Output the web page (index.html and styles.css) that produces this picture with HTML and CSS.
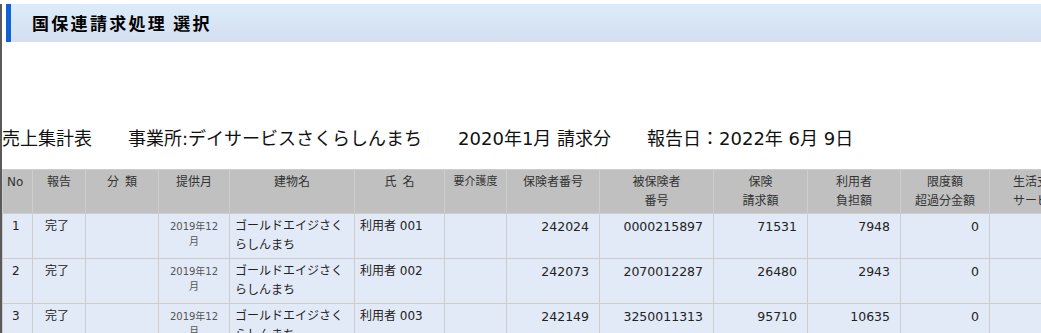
FILE: index.html
```html
<!DOCTYPE html>
<html lang="ja">
<head>
<meta charset="utf-8">
<title>国保連請求処理 選択</title>
<link rel="stylesheet" href="styles.css">
</head>
<body>
<div class="frame">
  <h1 class="page-title">国保連請求処理 選択</h1>
  <p class="summary"><span class="seg">売上集計表</span><span class="seg">事業所:デイサービスさくらしんまち</span><span class="seg">2020年1月 請求分</span><span class="seg">報告日：2022年 6月 9日</span></p>
  <table class="report">
    <colgroup>
      <col class="c-no"><col class="c-rep"><col class="c-cat"><col class="c-month"><col class="c-bldg"><col class="c-name"><col class="c-care"><col class="c-insr"><col class="c-insd"><col class="c-claim"><col class="c-user"><col class="c-over"><col class="c-life"><col class="c-total">
    </colgroup>
    <thead>
      <tr>
        <th>No</th>
        <th>報告</th>
        <th>分&ensp;類</th>
        <th>提供月</th>
        <th>建物名</th>
        <th>氏&ensp;名</th>
        <th class="small">要介護度</th>
        <th>保険者番号</th>
        <th>被保険者<br>番号</th>
        <th>保険<br>請求額</th>
        <th>利用者<br>負担額</th>
        <th>限度額<br>超過分金額</th>
        <th>生活支援<br>サービス</th>
        <th>合計</th>
      </tr>
    </thead>
    <tbody>
      <tr>
        <td>1</td><td class="rep">完了</td><td></td><td class="month">2019年12<br>月</td><td>ゴールドエイジさく<br>らしんまち</td><td>利用者 001</td><td></td><td class="num">242024</td><td class="num">0000215897</td><td class="num">71531</td><td class="num">7948</td><td class="num">0</td><td></td><td></td>
      </tr>
      <tr>
        <td>2</td><td class="rep">完了</td><td></td><td class="month">2019年12<br>月</td><td>ゴールドエイジさく<br>らしんまち</td><td>利用者 002</td><td></td><td class="num">242073</td><td class="num">2070012287</td><td class="num">26480</td><td class="num">2943</td><td class="num">0</td><td></td><td></td>
      </tr>
      <tr>
        <td>3</td><td class="rep">完了</td><td></td><td class="month">2019年12<br>月</td><td>ゴールドエイジさく<br>らしんまち</td><td>利用者 003</td><td></td><td class="num">242149</td><td class="num">3250011313</td><td class="num">95710</td><td class="num">10635</td><td class="num">0</td><td></td><td></td>
      </tr>
    </tbody>
  </table>
</div>
</body>
</html>
```

FILE: styles.css
```css
html, body {
  margin: 0;
  padding: 0;
  overflow: hidden;
  background: #ffffff;
}

body {
  font-family: "DejaVu Sans", "Noto Sans CJK JP", sans-serif;
  color: #222;
}

.frame {
  border-left: 2px solid #5a5a5a;
  min-height: 100vh;
  box-sizing: border-box;
}

.page-title {
  margin: 4px 0 0 4px;
  height: 38px;
  box-sizing: border-box;
  border-left: 5px solid #0f63d2;
  padding-left: 21px;
  background: linear-gradient(to bottom, #dcebf9 0%, #d5dff1 100%);
  font-family: "Noto Sans CJK JP", sans-serif;
  font-size: 17px;
  font-weight: 700;
  line-height: 38px;
  color: #000;
  letter-spacing: 2.3px;
}

.summary {
  margin: 85px 0 0 0;
  font-size: 18px;
  line-height: 24px;
  color: #111;
  white-space: nowrap;
}

.seg + .seg {
  margin-left: 36px;
}

.report {
  margin-top: 18px;
  border-collapse: collapse;
  table-layout: fixed;
  width: 1178px;
  font-size: 12px;
}

.report th,
.report td {
  border: 1px solid #cdcdcd;
  vertical-align: top;
  white-space: nowrap;
  overflow: hidden;
}

.report th {
  background: #c0c0c0;
  color: #333;
  font-weight: 400;
  height: 44px;
  box-sizing: border-box;
  padding: 3px 2px 0;
  line-height: 19px;
  text-align: center;
}

.report th:first-child {
  text-align: left;
  padding-left: 4px;
}

.report th.small {
  font-size: 11px;
  line-height: 17px;
}

.report td {
  background: #e3eaf7;
  height: 45px;
  box-sizing: border-box;
  padding: 3px 5px 0;
  line-height: 19px;
  color: #222;
  font-size: 12px;
}

.report td:first-child {
  padding-left: 9px;
}

.report td.rep {
  padding-left: 12px;
}

.report td.month {
  font-size: 10px;
  line-height: 15px;
  color: #555;
  text-align: center;
  padding-top: 5px;
}

.report td.num {
  text-align: right;
  padding-right: 10px;
  font-size: 12.5px;
}

.c-no { width: 30px; }
.c-rep { width: 53px; }
.c-cat { width: 73px; }
.c-month { width: 71px; }
.c-bldg { width: 125px; }
.c-name { width: 90px; }
.c-care { width: 62px; }
.c-insr { width: 93px; }
.c-insd { width: 114px; }
.c-claim { width: 94px; }
.c-user { width: 93px; }
.c-over { width: 89px; }
.c-life { width: 95px; }
.c-total { width: 95px; }
```
